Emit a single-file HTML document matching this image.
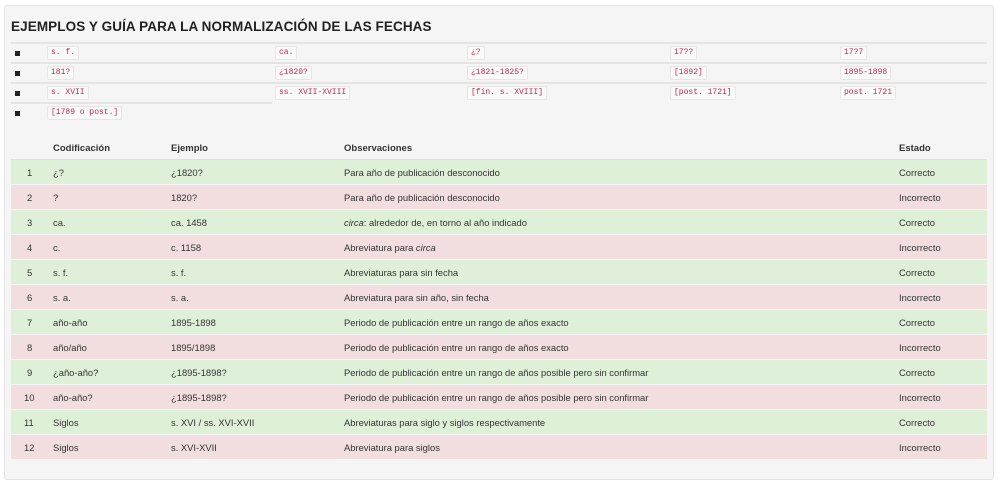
<!DOCTYPE html>
<html><head><meta charset="utf-8"><style>
*{margin:0;padding:0;box-sizing:border-box}
body{width:1000px;height:483px;background:#fff;font-family:"Liberation Sans",Arial,sans-serif;color:#333;position:relative;overflow:hidden}
.panel{position:absolute;left:4px;top:5px;width:990px;height:475px;background:#f5f5f5;border:1px solid #e3e3e3;border-radius:3px}
h1{position:absolute;left:11px;top:19px;font-size:13.5px;font-weight:bold;color:#222;letter-spacing:0.1px}
.hl{position:absolute;height:2px;background:#e4e4e4}
.b{position:absolute;width:5px;height:5px;background:#222}
code{position:absolute;font-family:"Liberation Mono",monospace;font-size:8px;color:#c7254e;background:#fafafa;border:1px solid #e6e6e6;border-radius:2px;padding:0 3px;height:14px;line-height:12px;white-space:pre}
.t{position:absolute;font-size:9.5px;white-space:nowrap}
.th{font-weight:bold;color:#333}
.row{position:absolute;left:11px;width:976px;height:24px}
.g{background:#dff0d8}.r{background:#f2dede}
.row span{position:absolute;top:7px;font-size:9.4px;color:#333;white-space:nowrap}
</style></head><body>
<div class="panel"></div>
<h1>EJEMPLOS Y GUÍA PARA LA NORMALIZACIÓN DE LAS FECHAS</h1>
<div class="hl" style="left:11px;top:42px;width:976px"></div>
<div class="hl" style="left:11px;top:62px;width:976px"></div>
<div class="hl" style="left:11px;top:82px;width:976px"></div>
<div class="hl" style="left:11px;top:102px;width:261px"></div>
<div class="b" style="left:15px;top:51px"></div>
<div class="b" style="left:15px;top:71px"></div>
<div class="b" style="left:15px;top:91px"></div>
<div class="b" style="left:15px;top:111px"></div>
<code style="left:47px;top:46px">s. f.</code>
<code style="left:275px;top:46px">ca.</code>
<code style="left:467px;top:46px">¿?</code>
<code style="left:670px;top:46px">17??</code>
<code style="left:840px;top:46px">17?7</code>
<code style="left:47px;top:66px">181?</code>
<code style="left:275px;top:66px">¿1820?</code>
<code style="left:467px;top:66px">¿1821-1825?</code>
<code style="left:670px;top:66px">[1892]</code>
<code style="left:840px;top:66px">1895-1898</code>
<code style="left:47px;top:86px">s. XVII</code>
<code style="left:275px;top:86px">ss. XVII-XVIII</code>
<code style="left:467px;top:86px">[fin. s. XVIII]</code>
<code style="left:670px;top:86px">[post. 1721]</code>
<code style="left:840px;top:86px">post. 1721</code>
<code style="left:47px;top:106px">[1789 o post.]</code>
<div class="t th" style="left:53px;top:143px">Codificación</div>
<div class="t th" style="left:171px;top:143px">Ejemplo</div>
<div class="t th" style="left:344px;top:143px">Observaciones</div>
<div class="t th" style="left:899px;top:143px">Estado</div>
<div class="hl" style="left:11px;top:159px;width:976px;height:1px;background:#ddd"></div>
<div class="row g" style="top:160px"><span style="left:16px">1</span><span style="left:42px">¿?</span><span style="left:160px">¿1820?</span><span style="left:333px">Para año de publicación desconocido</span><span style="left:888px">Correcto</span></div>
<div class="row r" style="top:185px"><span style="left:16px">2</span><span style="left:42px">?</span><span style="left:160px">1820?</span><span style="left:333px">Para año de publicación desconocido</span><span style="left:888px">Incorrecto</span></div>
<div class="row g" style="top:210px"><span style="left:16px">3</span><span style="left:42px">ca.</span><span style="left:160px">ca. 1458</span><span style="left:333px"><i>circa</i>: alrededor de, en torno al año indicado</span><span style="left:888px">Correcto</span></div>
<div class="row r" style="top:235px"><span style="left:16px">4</span><span style="left:42px">c.</span><span style="left:160px">c. 1158</span><span style="left:333px">Abreviatura para <i>circa</i></span><span style="left:888px">Incorrecto</span></div>
<div class="row g" style="top:260px"><span style="left:16px">5</span><span style="left:42px">s. f.</span><span style="left:160px">s. f.</span><span style="left:333px">Abreviaturas para sin fecha</span><span style="left:888px">Correcto</span></div>
<div class="row r" style="top:285px"><span style="left:16px">6</span><span style="left:42px">s. a.</span><span style="left:160px">s. a.</span><span style="left:333px">Abreviatura para sin año, sin fecha</span><span style="left:888px">Incorrecto</span></div>
<div class="row g" style="top:310px"><span style="left:16px">7</span><span style="left:42px">año-año</span><span style="left:160px">1895-1898</span><span style="left:333px">Periodo de publicación entre un rango de años exacto</span><span style="left:888px">Correcto</span></div>
<div class="row r" style="top:335px"><span style="left:16px">8</span><span style="left:42px">año/año</span><span style="left:160px">1895/1898</span><span style="left:333px">Periodo de publicación entre un rango de años exacto</span><span style="left:888px">Incorrecto</span></div>
<div class="row g" style="top:360px"><span style="left:16px">9</span><span style="left:42px">¿año-año?</span><span style="left:160px">¿1895-1898?</span><span style="left:333px">Periodo de publicación entre un rango de años posible pero sin confirmar</span><span style="left:888px">Correcto</span></div>
<div class="row r" style="top:385px"><span style="left:13px">10</span><span style="left:42px">año-año?</span><span style="left:160px">¿1895-1898?</span><span style="left:333px">Periodo de publicación entre un rango de años posible pero sin confirmar</span><span style="left:888px">Incorrecto</span></div>
<div class="row g" style="top:410px"><span style="left:13px">11</span><span style="left:42px">Siglos</span><span style="left:160px">s. XVI / ss. XVI-XVII</span><span style="left:333px">Abreviaturas para siglo y siglos respectivamente</span><span style="left:888px">Correcto</span></div>
<div class="row r" style="top:435px"><span style="left:13px">12</span><span style="left:42px">Siglos</span><span style="left:160px">s. XVI-XVII</span><span style="left:333px">Abreviatura para siglos</span><span style="left:888px">Incorrecto</span></div>
</body></html>
